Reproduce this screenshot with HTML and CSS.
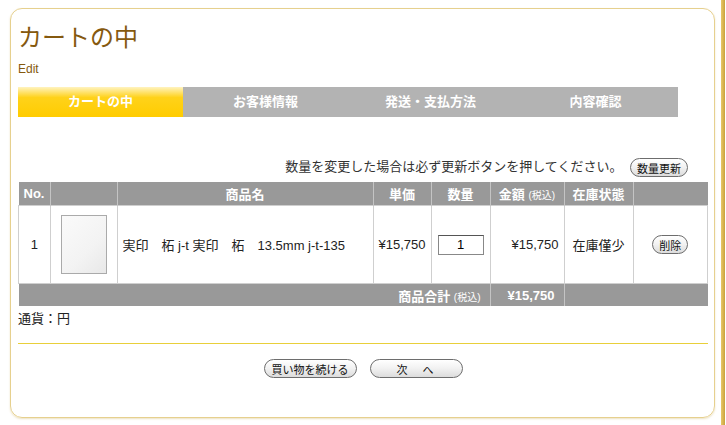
FILE: index.html
```html
<!DOCTYPE html>
<html lang="ja">
<head>
  <meta charset="UTF-8">
  <title>カートの中</title>
  <link rel="stylesheet" href="styles.css">
</head>
<body>
  <div id="pagina">
    <div id="caixa">
      <h1>カートの中</h1>
      <div class="edit">Edit</div>

      <div id="passos">
        <div class="passo ativo">カートの中</div>
        <div class="passo">お客様情報</div>
        <div class="passo">発送・支払方法</div>
        <div class="passo">内容確認</div>
      </div>

      <div class="aviso">
        数量を変更した場合は必ず更新ボタンを押してください。
        <button class="botao">数量更新</button>
      </div>

      <table id="carrinho">
        <tr class="cab">
          <th class="c-no">No.</th>
          <th class="c-img"></th>
          <th class="c-nome">商品名</th>
          <th class="c-preco">単価</th>
          <th class="c-qtd">数量</th>
          <th class="c-valor">金額 <small>(税込)</small></th>
          <th class="c-estoque">在庫状態</th>
          <th class="c-acao"></th>
        </tr>
        <tr class="item">
          <td class="centro">1</td>
          <td class="centro"><div class="foto"></div></td>
          <td>実印　柘 j-t 実印　柘　13.5mm j-t-135</td>
          <td class="direita">¥15,750</td>
          <td class="centro"><input class="qtd" type="text" value="1"></td>
          <td class="direita">¥15,750</td>
          <td class="centro">在庫僅少</td>
          <td class="centro"><button class="botao">削除</button></td>
        </tr>
        <tr class="total">
          <td colspan="5" class="direita">商品合計 <small>(税込)</small></td>
          <td class="direita">¥15,750</td>
          <td colspan="2"></td>
        </tr>
      </table>

      <div class="moeda">通貨：円</div>

      <div id="rodape">
        <button class="botao">買い物を続ける</button>
        <button class="botao largo">次　へ</button>
      </div>
    </div>
    <div id="faixa"></div>
  </div>
</body>
</html>
```

FILE: styles.css
```css
body {
  margin: 0;
  padding: 0;
  background-color: #fff;
  font-family: "Liberation Sans", "Noto Sans CJK JP", sans-serif;
  color: #222;
}

#pagina {
  display: flex;
  align-items: flex-start;
  padding: 8px 0 0 10px;
}

#caixa {
  width: 690px;
  height: 408px;
  padding: 0 6px 0 7px;
  border: 1px solid #e6d08e;
  border-radius: 12px;
  box-shadow: 0 1px 2px rgba(200, 170, 80, 0.35);
}

#faixa {
  width: 4px;
  height: 425px;
  margin-left: 6px;
  margin-top: -8px;
  background: linear-gradient(to right, #e8c868, #c9a23c);
}

h1 {
  margin: 14px 0 0;
  font-size: 24px;
  line-height: 30px;
  font-weight: normal;
  color: #85590f;
}

.edit {
  margin-top: 8px;
  font-size: 12px;
  line-height: 16px;
  color: #85590f;
}

#passos {
  display: flex;
  width: 660px;
  margin-top: 10px;
  background: #b3b3b3;
}

.passo {
  width: 165px;
  height: 30px;
  line-height: 30px;
  text-align: center;
  color: #fff;
  font-size: 13px;
  font-weight: bold;
}

.passo.ativo {
  background: linear-gradient(to bottom, #fff3c0 0%, #ffd21a 35%, #ffcc00 100%);
}

.aviso {
  margin-top: 40px;
  margin-right: 20px;
  text-align: right;
  font-size: 13px;
  line-height: 20px;
  color: #333;
}

.botao {
  font-family: "Liberation Sans", "Noto Sans CJK JP", sans-serif;
  font-size: 11px;
  height: 19px;
  padding: 0 6px;
  white-space: nowrap;
  border: 1px solid #6d6d6d;
  border-radius: 10px;
  background: linear-gradient(to bottom, #ffffff 0%, #f1f1f1 50%, #dcdcdc 100%);
  color: #111;
  vertical-align: middle;
}

.aviso .botao {
  margin-left: 4px;
}

#carrinho {
  width: 690px;
  margin-top: 5px;
  border-collapse: collapse;
  font-size: 13px;
}

#carrinho th {
  height: 23px;
  padding: 0;
  background: #999;
  color: #fff;
  font-weight: bold;
  font-size: 13px;
  border-left: 1px solid #c4c4c4;
}

#carrinho th:first-child {
  border-left: none;
}

#carrinho small {
  font-size: 10px;
  font-weight: normal;
}

.c-no { width: 31px; }
.c-img { width: 66px; }
.c-preco { width: 57px; }
.c-qtd { width: 58px; }
.c-valor { width: 73px; }
.c-estoque { width: 68px; }
.c-acao { width: 74px; }

.item td {
  height: 77px;
  padding: 0 5px;
  border: 1px solid #cfcfcf;
  color: #222;
}

.centro { text-align: center; }
.direita { text-align: right; }

.foto {
  width: 44px;
  height: 57px;
  margin: 0 auto;
  border: 1px solid #aaa;
  background: linear-gradient(135deg, #fafafa 0%, #f3f3f3 60%, #e8e8e8 100%);
}

.qtd {
  width: 38px;
  height: 16px;
  padding: 1px 3px;
  border: 1px solid #888;
  border-top-color: #555;
  text-align: center;
  font-size: 13px;
  font-family: "Liberation Sans", sans-serif;
}

.total td {
  height: 22px;
  padding: 0 9px;
  background: #999;
  color: #fff;
  font-weight: bold;
  border-left: 1px solid #c4c4c4;
}

.total td:first-child {
  border-left: none;
}

.moeda {
  margin-top: 4px;
  font-size: 13px;
  line-height: 18px;
  color: #222;
}

#rodape {
  margin-top: 15px;
  padding-top: 15px;
  border-top: 1px solid #e8cf3a;
  display: flex;
  justify-content: center;
  gap: 13px;
}

#rodape .botao {
  width: 93px;
}

#rodape .largo {
  letter-spacing: 2px;
}
```
